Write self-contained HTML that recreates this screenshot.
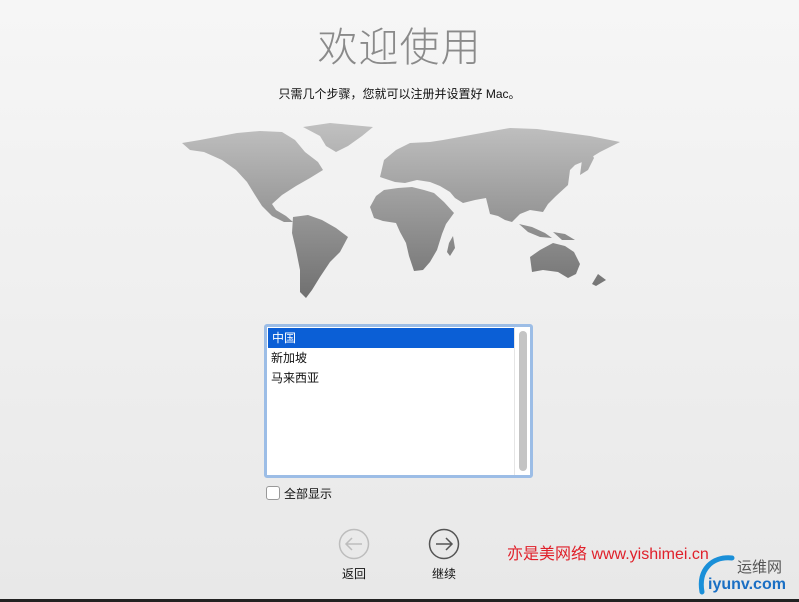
<!DOCTYPE html>
<html><head><meta charset="utf-8"><style>
html,body{margin:0;padding:0}
body{width:799px;height:602px;overflow:hidden;position:relative;background:linear-gradient(#f6f6f6,#e8e8e8);font-family:"Liberation Sans","Noto Sans CJK SC",sans-serif}
.t{position:absolute;left:0;width:799px;text-align:center;top:23px;font-size:40px;color:#8a8a8a;font-weight:300;letter-spacing:1px;line-height:50px}
.s{position:absolute;left:0;width:799px;text-align:center;top:85px;font-size:12px;color:#111}
.list{position:absolute;left:264px;top:324px;width:263px;height:148px;border:3px solid #9cbde6;border-radius:3px;background:#fff}
.row{height:20px;line-height:20px;font-size:12px;padding-left:4px;color:#111}
.sel{background:#0b5fd6;color:#fff;width:243px;margin:1px 0 0 1px}
.sb{position:absolute;right:3px;top:4px;width:8px;height:140px;border-radius:4px;background:#c4c4c4}
.sbt{position:absolute;right:0;top:0;width:15px;height:148px;border-left:1px solid #e5e5e5}
.cb{position:absolute;left:266px;top:486px;width:12px;height:12px;border:1px solid #999;border-radius:3px;background:#fff}
.cbl{position:absolute;left:284px;top:485px;font-size:12px;color:#111}
.lbl{position:absolute;top:565px;font-size:12px;color:#111;width:60px;text-align:center}
.wm{position:absolute;left:507px;top:540px;font-size:16px;color:#e0202a}
.bar{position:absolute;left:0;top:599px;width:799px;height:3px;background:#222}
</style></head><body>
<div class="t">欢迎使用</div>
<div class="s">只需几个步骤，您就可以注册并设置好 Mac。</div>
<svg style="position:absolute;left:0;top:0" width="799" height="310">
<defs><linearGradient id="g" x1="0" y1="120" x2="0" y2="300" gradientUnits="userSpaceOnUse"><stop offset="0" stop-color="#c2c2c2"/><stop offset="1" stop-color="#6f6f6f"/></linearGradient></defs>
<g fill="url(#g)">
<path d="M182,143 L200,140 L237,133 L260,131 L282,132 L295,140 L305,152 L318,162 L323,170 L310,178 L296,186 L282,195 L272,204 L276,210 L286,216 L293,222 L284,222 L272,216 L262,206 L255,195 L247,182 L236,170 L222,160 L204,152 L190,150 Z"/>
<path d="M303,127 L330,123 L373,127 L362,136 L348,146 L336,152 L326,146 L320,136 Z"/>
<path d="M293,217 L308,215 L322,220 L336,228 L348,237 L340,252 L330,262 L320,277 L312,290 L306,298 L300,292 L300,270 L296,250 L292,233 Z"/>
<path d="M380,177 L384,160 L396,150 L410,143 L430,142 L443,140 L465,136 L487,132 L510,128 L537,129 L560,132 L590,136 L620,142 L600,152 L587,160 L575,165 L570,170 L568,185 L556,196 L548,204 L543,212 L530,210 L520,214 L512,222 L505,220 L498,216 L490,214 L486,198 L475,200 L463,203 L455,198 L450,192 L440,186 L430,182 L417,180 L405,183 L395,182 Z"/>
<path d="M370,207 L376,196 L384,190 L398,188 L412,187 L424,190 L434,193 L444,202 L454,213 L446,224 L442,234 L437,250 L430,262 L423,270 L414,271 L409,256 L406,243 L400,232 L396,223 L383,221 L374,218 Z"/>
<path d="M449,243 L453,236 L455,248 L450,256 L447,252 Z"/>
<path d="M530,257 L540,250 L553,243 L565,246 L574,252 L580,264 L576,274 L568,278 L558,272 L543,270 L532,272 Z"/>
<path d="M519,224 L532,227 L545,233 L552,238 L540,237 L528,232 Z"/>
<path d="M553,232 L565,234 L575,240 L562,240 Z"/>
<path d="M582,160 L590,150 L594,158 L588,170 L580,175 Z"/>
<path d="M598,274 L606,280 L596,286 L592,284 Z"/>
</g></svg>
<div class="list">
<div class="row sel">中国</div>
<div class="row">新加坡</div>
<div class="row">马来西亚</div>
<div class="sbt"></div><div class="sb"></div>
</div>
<div class="cb"></div><div class="cbl">全部显示</div>
<svg style="position:absolute;left:336px;top:526px" width="36" height="36"><circle cx="18" cy="18" r="14.5" fill="none" stroke="#bdbdbd" stroke-width="1.5"/><path d="M26,18 H10 M16,12 L10,18 L16,24" fill="none" stroke="#bdbdbd" stroke-width="1.5"/></svg>
<svg style="position:absolute;left:426px;top:526px" width="36" height="36"><circle cx="18" cy="18" r="14.5" fill="none" stroke="#555" stroke-width="1.5"/><path d="M10,18 H26 M20,12 L26,18 L20,24" fill="none" stroke="#555" stroke-width="1.5"/></svg>
<div class="lbl" style="left:324px">返回</div>
<div class="lbl" style="left:414px">继续</div>
<div class="wm">亦是美网络 www.yishimei.cn</div>
<svg style="position:absolute;left:690px;top:548px" width="109" height="50"><path d="M42,10 C22,8 8,22 12,44" fill="none" stroke="#1a8fd8" stroke-width="5" stroke-linecap="round"/></svg>
<div style="position:absolute;left:737px;top:556px;font-size:15px;color:#555">运维网</div>
<div style="position:absolute;left:708px;top:576px;font-size:16px;color:#1a6fc4;font-weight:bold">iyunv.com</div>
<div class="bar"></div>
</body></html>
